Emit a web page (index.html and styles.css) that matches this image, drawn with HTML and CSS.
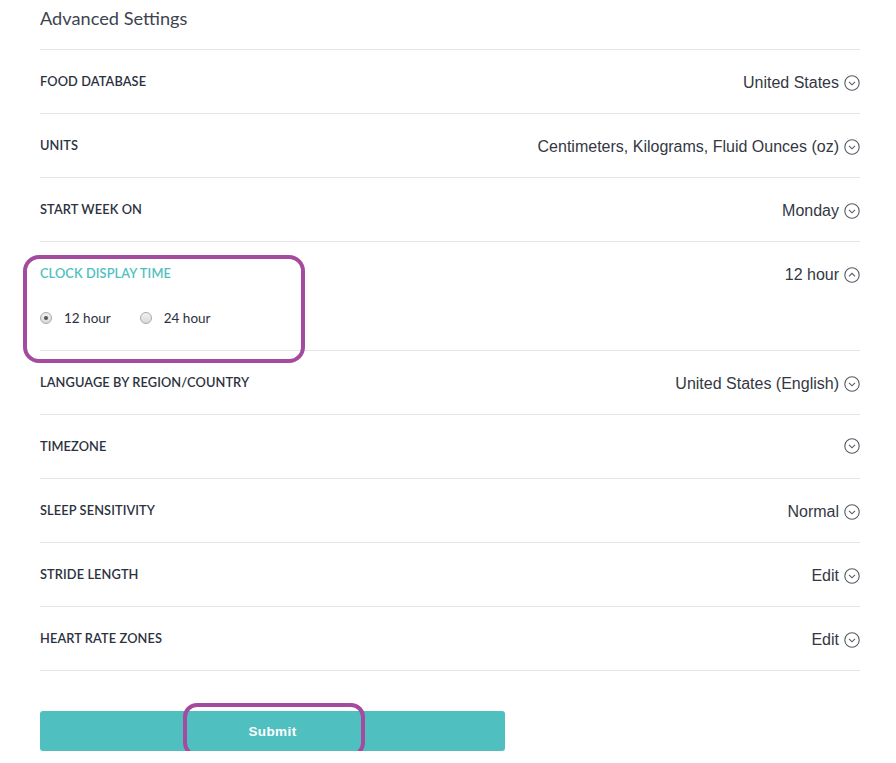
FILE: index.html
```html
<!DOCTYPE html>
<html>
<head>
<meta charset="utf-8">
<link rel="stylesheet" href="styles.css">
</head>
<body>
<div class="page">
  <h1 class="title">Advanced Settings</h1>
  <div class="row">
    <div class="label">FOOD DATABASE</div>
    <div class="value">United States <svg class="chev" viewBox="0 0 16 16"><circle cx="8" cy="8" r="7.2"/><path d="M5 6.8 L8 9.8 L11 6.8"/></svg></div>
  </div>
  <div class="row">
    <div class="label">UNITS</div>
    <div class="value">Centimeters, Kilograms, Fluid Ounces (oz) <svg class="chev" viewBox="0 0 16 16"><circle cx="8" cy="8" r="7.2"/><path d="M5 6.8 L8 9.8 L11 6.8"/></svg></div>
  </div>
  <div class="row">
    <div class="label">START WEEK ON</div>
    <div class="value">Monday <svg class="chev" viewBox="0 0 16 16"><circle cx="8" cy="8" r="7.2"/><path d="M5 6.8 L8 9.8 L11 6.8"/></svg></div>
  </div>
  <div class="row row-open">
    <div class="open-left">
      <div class="label label-active">CLOCK DISPLAY TIME</div>
      <div class="radios">
        <label class="radio"><span class="dot checked"></span>12 hour</label>
        <label class="radio"><span class="dot"></span>24 hour</label>
      </div>
    </div>
    <div class="value">12 hour <svg class="chev" viewBox="0 0 16 16"><circle cx="8" cy="8" r="7.2"/><path d="M5 9.4 L8 6.4 L11 9.4"/></svg></div>
    <div class="mark mark-clock"></div>
  </div>
  <div class="row">
    <div class="label">LANGUAGE BY REGION/COUNTRY</div>
    <div class="value">United States (English) <svg class="chev" viewBox="0 0 16 16"><circle cx="8" cy="8" r="7.2"/><path d="M5 6.8 L8 9.8 L11 6.8"/></svg></div>
  </div>
  <div class="row">
    <div class="label">TIMEZONE</div>
    <div class="value"><svg class="chev" viewBox="0 0 16 16"><circle cx="8" cy="8" r="7.2"/><path d="M5 6.8 L8 9.8 L11 6.8"/></svg></div>
  </div>
  <div class="row">
    <div class="label">SLEEP SENSITIVITY</div>
    <div class="value">Normal <svg class="chev" viewBox="0 0 16 16"><circle cx="8" cy="8" r="7.2"/><path d="M5 6.8 L8 9.8 L11 6.8"/></svg></div>
  </div>
  <div class="row">
    <div class="label">STRIDE LENGTH</div>
    <div class="value">Edit <svg class="chev" viewBox="0 0 16 16"><circle cx="8" cy="8" r="7.2"/><path d="M5 6.8 L8 9.8 L11 6.8"/></svg></div>
  </div>
  <div class="row">
    <div class="label">HEART RATE ZONES</div>
    <div class="value">Edit <svg class="chev" viewBox="0 0 16 16"><circle cx="8" cy="8" r="7.2"/><path d="M5 6.8 L8 9.8 L11 6.8"/></svg></div>
  </div>
  <div class="actions">
    <button class="submit">Submit</button>
    <div class="mark mark-submit"></div>
  </div>
</div>
</body>
</html>
```
FILE: styles.css
```css
html, body {
  margin: 0;
  padding: 0;
  background: #fff;
}
.page {
  width: 820px;
  margin-left: 40px;
  font-family: "Liberation Sans", Arial, sans-serif;
  position: relative;
}
.title {
  margin: 0;
  padding-top: 8px;
  box-sizing: border-box;
  height: 50px;
  font-family: "Lato", "Liberation Sans", sans-serif;
  font-weight: 400;
  font-size: 18.2px;
  line-height: 20px;
  color: #3d4350;
  border-bottom: 1px solid #e6e6e6;
}
.row {
  position: relative;
  display: flex;
  justify-content: space-between;
  align-items: flex-start;
  height: 64px;
  box-sizing: border-box;
  padding-top: 23px;
  border-bottom: 1px solid #e6e6e6;
}
.label {
  font-family: "Lato", "Liberation Sans", sans-serif;
  font-weight: 600;
  font-size: 12.8px;
  line-height: 16px;
  color: #2c3140;
  letter-spacing: 0.1px;
}
.label-active {
  color: #4fc0c0;
}
.value {
  display: flex;
  align-items: center;
  gap: 5px;
  font-size: 16px;
  line-height: 20px;
  color: #333843;
  margin-top: 0;
}
.chev {
  width: 16px;
  height: 16px;
  fill: none;
  stroke: #555a63;
  stroke-width: 1.1;
}
.row-open {
  height: 109px;
  padding-top: 23px;
}
.radios {
  display: flex;
  gap: 29px;
  margin-top: 29px;
  margin-left: 0;
}
.radio {
  display: flex;
  align-items: center;
  gap: 12px;
  font-family: "Lato", "Liberation Sans", sans-serif;
  font-size: 13.5px;
  line-height: 16px;
  color: #2c3140;
}
.dot {
  width: 12px;
  height: 12px;
  border-radius: 50%;
  border: 1px solid #a9a9a9;
  background: linear-gradient(#f1f1f1, #d9d9d9);
  box-sizing: border-box;
  position: relative;
}
.dot.checked::after {
  content: "";
  position: absolute;
  left: 3px;
  top: 3px;
  width: 4px;
  height: 4px;
  border-radius: 50%;
  background: #555;
}
.mark {
  position: absolute;
  border: 4px solid #a44ba0;
  border-radius: 16px;
  box-sizing: border-box;
  pointer-events: none;
}
.mark-clock {
  left: -17px;
  top: 13px;
  width: 282px;
  height: 108px;
}
.actions {
  position: relative;
  padding-top: 40px;
}
.submit {
  display: block;
  width: 465px;
  height: 40px;
  border: none;
  border-radius: 3px;
  background: #4fbfbf;
  color: #fff;
  font-family: "Liberation Sans", Arial, sans-serif;
  font-weight: 700;
  font-size: 13.5px;
  letter-spacing: 0.4px;
  padding: 0;
}
.mark-submit {
  left: 143px;
  top: 32px;
  width: 182px;
  height: 54px;
  border-radius: 14px;
}
```
